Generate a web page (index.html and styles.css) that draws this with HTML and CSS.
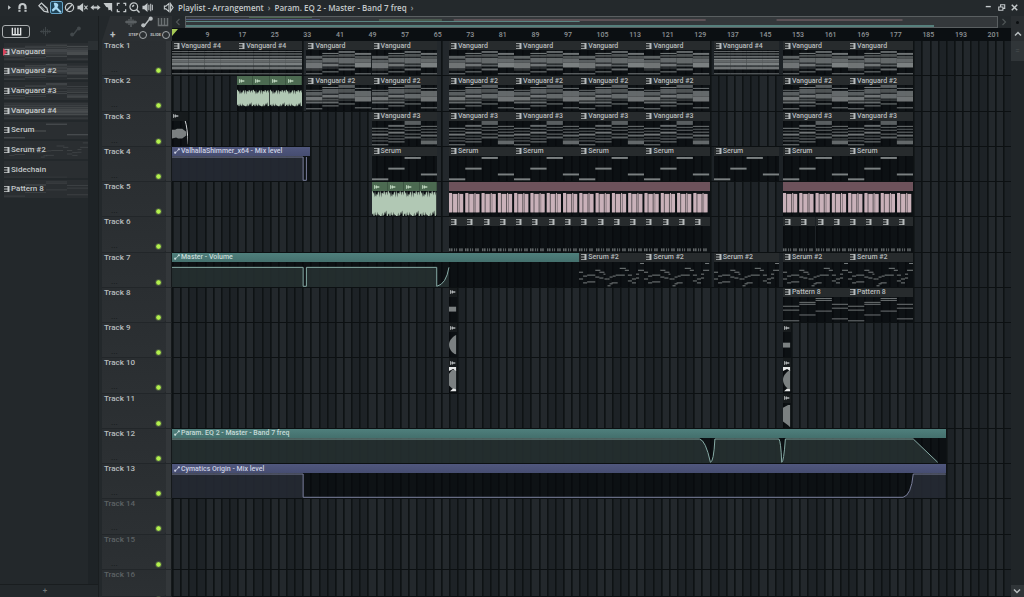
FILE: index.html
```html
<!DOCTYPE html>
<html lang="en">

<head>
  <meta charset="UTF-8" />
  <meta name="viewport" content="width=device-width, initial-scale=1.0" />
  <title>Playlist - Arrangement</title>
  <link rel="stylesheet" href="styles.css">
</head>

<body>
  <svg class="sprites" aria-hidden="true">
    <symbol id="i-arrow" viewBox="0 0 12 12"><path d="M4.5 3.5v5L7.5 6z" fill="currentColor"/></symbol>
    <symbol id="i-magnet" viewBox="0 0 12 12"><path d="M2.700 10.500V5.500a3.300 3.300 0 0 1 6.600 0v5" fill="none" stroke="currentColor" stroke-width="2.400"/><path d="M1 8.300h3.500M7.500 8.300H11" stroke="#23282b" stroke-width="0.900"/></symbol>
    <symbol id="i-pencil" viewBox="0 0 12 12"><path d="M1 4 3.800 1.200l6 5.500 1 4.300-4.300-1z" fill="none" stroke="currentColor" stroke-width="1.400"/><path d="m3 4.500 4 4M5 3l4 4" stroke="currentColor" stroke-width="0.900"/></symbol>
    <symbol id="i-brush" viewBox="0 0 12 12"><path d="M3 1c2-.8 5 0 5 2.500L7 6l4.500 4.500L10 12 5.500 7.800 2 10.500.8 8.500 4 5.500z" fill="currentColor"/></symbol>
    <symbol id="i-delete" viewBox="0 0 12 12"><circle cx="6" cy="6" r="4.500" fill="none" stroke="currentColor" stroke-width="1.300"/><path d="m3 9 6-6" stroke="currentColor" stroke-width="1.300"/></symbol>
    <symbol id="i-mute" viewBox="0 0 12 12"><path d="M.5 4h2.200L6.700 1v10l-4-3H.5z" fill="currentColor"/><path d="m8 4 3.500 4m0-4L8 8" stroke="currentColor" stroke-width="1.100"/></symbol>
    <symbol id="i-slip" viewBox="0 0 12 12"><path d="M0.500 6 4 3V5h4V3L11.500 6 8 9V7H4v2z" fill="currentColor"/></symbol>
    <symbol id="i-slice" viewBox="0 0 12 12"><path d="M.5 1H10v10L8 8.500 6 9 5.500 6 3.500 5.500z" fill="currentColor"/></symbol>
    <symbol id="i-select" viewBox="0 0 12 12"><path d="M1.500 4V1.500H4M8 1.500h2.500V4M10.500 8v2.500H8M4 10.500H1.500V8" fill="none" stroke="currentColor" stroke-width="1.400"/></symbol>
    <symbol id="i-zoom" viewBox="0 0 12 12"><circle cx="5.200" cy="5.200" r="4.200" fill="none" stroke="currentColor" stroke-width="1.300"/><path d="m8.200 8.200 3.300 3.300M3.500 5 5.500 3.500" stroke="currentColor" stroke-width="1.600"/></symbol>
    <symbol id="i-play" viewBox="0 0 12 12"><path d="M.5 4h2L6 1v10L2.500 8h-2z" fill="currentColor"/><path d="M7.500 3v6M9.500 2v8M11.300 3v6" stroke="currentColor" stroke-width="1.100"/></symbol>
    <symbol id="i-speaker" viewBox="0 0 12 12"><path d="M1.500 4.500h1.700L6.500 1.500v9L3.200 7.500H1.500zM8.300 2v8L11 6z" fill="none" stroke="currentColor" stroke-width="1.200"/></symbol>
    <symbol id="i-piano" viewBox="0 0 12 12"><path d="M1.500 2v7.500h9V2M4.500 2v7M7.500 2v7" fill="none" stroke="currentColor" stroke-width="1.500"/></symbol>
    <symbol id="i-wave" viewBox="0 0 12 12"><path d="M0 6h12M2 4.500v3M4 3v6M6 1v10M8 3.500v5M10 4.500v3" stroke="currentColor" stroke-width="1"/></symbol>
    <symbol id="i-auto" viewBox="0 0 12 12"><path d="M1.500 9.500h2l5.500-7h2" fill="none" stroke="currentColor" stroke-width="1.500"/><circle cx="2.300" cy="9.300" r="2.100" fill="currentColor"/><circle cx="9.700" cy="2.700" r="2.100" fill="currentColor"/></symbol>
    <symbol id="i-pattern" viewBox="0 0 6 6"><path d="M0 .5h4M0 3h4M0 5.500h4" stroke="currentColor" stroke-width="1" opacity="0.8"/><path d="M3.500 0h2v6h-2z" fill="currentColor"/></symbol>
    <symbol id="i-clip" viewBox="0 0 6 6"><path d="M.7 1v4M0 3h5.500M2.500 1.500v3M4 2v2" stroke="currentColor" stroke-width="0.900"/></symbol>
    <symbol id="i-up" viewBox="0 0 12 12"><path d="m3 7.500 3-3 3 3" fill="none" stroke="currentColor" stroke-width="1.500"/></symbol>
    <symbol id="i-down" viewBox="0 0 12 12"><path d="m3 4.500 3 3 3-3" fill="none" stroke="currentColor" stroke-width="1.500"/></symbol>
    <symbol id="i-left" viewBox="0 0 12 12"><path d="m7.500 3-3 3 3 3" fill="none" stroke="currentColor" stroke-width="1.200"/></symbol>
    <symbol id="i-right" viewBox="0 0 12 12"><path d="m4.500 3 3 3-3 3" fill="none" stroke="currentColor" stroke-width="1.200"/></symbol>
    <symbol id="i-min" viewBox="0 0 12 12"><path d="M3 5h5.500" stroke="currentColor" stroke-width="1.500"/></symbol>
    <symbol id="i-restore" viewBox="0 0 12 12"><path d="M3 5.500h4.500V9H3zM5 5V3h4.500v4H8" fill="none" stroke="currentColor" stroke-width="1.200"/></symbol>
    <symbol id="i-close" viewBox="0 0 12 12"><path d="m3 3 6 6m0-6L3 9" stroke="currentColor" stroke-width="1.600"/></symbol>
  </svg>

  <header class="titlebar">
    <div class="tools tools-menu">
      <button aria-label="Menu"><svg><use href="#i-arrow"/></svg></button>
      <button aria-label="Snap"><svg><use href="#i-magnet"/></svg></button>
    </div>
    <div class="tools">
      <button aria-label="Draw"><svg><use href="#i-pencil"/></svg></button>
      <button aria-label="Paint" class="active"><svg><use href="#i-brush"/></svg></button>
      <button aria-label="Delete"><svg><use href="#i-delete"/></svg></button>
      <button aria-label="Mute"><svg><use href="#i-mute"/></svg></button>
      <button aria-label="Slip"><svg><use href="#i-slip"/></svg></button>
      <button aria-label="Slice"><svg><use href="#i-slice"/></svg></button>
      <button aria-label="Select"><svg><use href="#i-select"/></svg></button>
      <button aria-label="Zoom"><svg><use href="#i-zoom"/></svg></button>
      <button aria-label="Playback"><svg><use href="#i-play"/></svg></button>
    </div>
    <h1 class="title">
      <svg><use href="#i-speaker"/></svg>
      <span>Playlist - Arrangement</span><i>›</i><span>Param. EQ 2 - Master - Band 7 freq</span><i>›</i>
    </h1>
    <div class="tools window-buttons">
      <button aria-label="Minimize"><svg><use href="#i-min"/></svg></button>
      <button aria-label="Restore"><svg><use href="#i-restore"/></svg></button>
      <button aria-label="Close"><svg><use href="#i-close"/></svg></button>
    </div>
  </header>

  <main class="workspace">
    <aside class="picker">
      <div class="picker-tabs">
        <button class="active" aria-label="Patterns"><svg><use href="#i-piano"/></svg></button>
        <button aria-label="Audio"><svg><use href="#i-wave"/></svg></button>
        <button aria-label="Automation"><svg><use href="#i-auto"/></svg></button>
      </div>
      <div class="picker-body">
        <div class="picker-list" id="picker"></div>
        <div class="picker-scroll"><button aria-label="Scroll options"></button></div>
      </div>
      <button class="picker-add" aria-label="Add pattern">+</button>
    </aside>

    <section class="playlist">
      <div class="playlist-head">
        <div class="corner">
          <div class="corner-row">
            <svg class="dim"><use href="#i-wave"/></svg>
            <svg><use href="#i-auto"/></svg>
            <svg class="dim"><use href="#i-piano"/></svg>
          </div>
          <div class="corner-row">
            <button class="add-track" aria-label="Add track">+</button>
            <label>STEP<input type="checkbox"></label>
            <label>SLIDE<input type="checkbox"></label>
          </div>
        </div>
        <div class="timeline">
          <div class="overview">
            <button aria-label="Scroll left"><svg><use href="#i-left"/></svg></button>
            <svg class="minimap" viewBox="0 0 206 10" preserveAspectRatio="none" id="minimap"></svg>
            <button aria-label="Scroll right"><svg><use href="#i-right"/></svg></button>
          </div>
          <div class="ruler" id="ruler"><span class="playhead"></span></div>
        </div>
        <div class="corner-right">
          <button class="dot" aria-label="Zoom"></button>
          <button aria-label="Scroll up"><svg><use href="#i-up"/></svg></button>
        </div>
      </div>
      <div class="playlist-body">
        <div class="tracks" id="tracks"></div>
        <div class="vscroll">
          <div class="thumb">=</div>
          <button aria-label="Scroll down"><svg><use href="#i-down"/></svg></button>
        </div>
      </div>
    </section>
  </main>

  <script src="playlist.js"></script>
</body>

</html>
```
FILE: styles.css
```css
* {
  box-sizing: border-box;
  margin: 0;
  padding: 0;
}

:root {
  --bars: 206;
  --panel: #23282b;
  --head: #2a2e31;
  --text: #b8bdbf;
  --note: #7b8081;
  --green: #4c6a51;
  --pink: #6d525b;
}

body {
  display: flex;
  flex-direction: column;
  height: 100vh;
  overflow: hidden;
  background: var(--panel);
  color: var(--text);
  font-family: Roboto, sans-serif;
  font-size: 8px;
  font-weight: 500;
  line-height: 8px;
}

button {
  border: none;
  background: none;
  color: inherit;
  font: inherit;
}

svg {
  display: block;
}

.sprites {
  position: absolute;
  width: 0;
  height: 0;
}

/* title bar */
.titlebar {
  display: flex;
  align-items: center;
  height: 16px;
  padding: 0 3px 1px;
  background: #24292c;
  color: #c4c9cb;
}

.tools {
  display: flex;
}

.tools-menu {
  margin-right: 8px;
}

.tools button {
  display: flex;
  align-items: center;
  justify-content: center;
  width: 13px;
  height: 13px;
}

.tools svg {
  width: 11px;
  height: 11px;
}

.tools .active {
  border: 1px solid #68a5c8;
  border-radius: 2px;
  background: #1f4357;
  color: #a5d7f2;
}

.title {
  display: flex;
  align-items: center;
  gap: 4px;
  margin-left: 9px;
  font-family: "Open Sans", sans-serif;
  font-size: 8px;
  font-weight: 600;
  line-height: 10px;
}

.title svg {
  width: 11px;
  height: 11px;
}

.title i {
  font-style: normal;
  opacity: 0.7;
}

.window-buttons {
  margin-left: auto;
}

.workspace {
  display: flex;
  flex: 1;
  min-height: 0;
}

/* pattern picker */
.picker {
  display: flex;
  flex-direction: column;
  width: 99px;
  border-right: 1px solid #1a1e20;
}

.picker-tabs {
  display: flex;
  height: 25px;
  padding: 9px 2px 3px;
}

.picker-tabs button {
  display: flex;
  align-items: center;
  justify-content: center;
  width: 30px;
  color: #42484b;
}

.picker-tabs .active {
  width: 28px;
  border: 1px solid #aaaeb0;
  border-radius: 3px;
  color: #e4e7e8;
}

.picker-tabs svg {
  width: 11px;
  height: 11px;
}

.picker-body {
  display: flex;
  flex: 1;
}

.picker-list {
  display: grid;
  grid-auto-rows: 1fr;
  width: 88px;
  height: 157px;
  margin-top: 1px;
  padding-left: 4px;
}

.pattern {
  position: relative;
  display: flex;
  align-items: center;
  gap: 1px;
  margin: 1px 0;
  background: #2a2e31;
  color: #c4c8c9;
  text-align: left;
}

.pattern .preview {
  position: absolute;
  inset: 1px 0;
  width: 100%;
  height: 16px;
  opacity: 0.2;
}

.pattern .icon {
  position: relative;
  width: 6px;
  height: 6px;
}

.pattern span {
  position: relative;
}

.pattern.selected::before {
  content: "";
  position: absolute;
  z-index: 1;
  left: -1px;
  border: 4px solid transparent;
  border-left-color: #d8435c;
  border-right: none;
}

.picker-scroll {
  width: 10px;
  margin-left: auto;
  background: #1e2326;
}

.picker-scroll button {
  display: block;
  width: 10px;
  height: 9px;
  background: #2b3033;
}

.picker-add {
  height: 13px;
  padding-right: 8px;
  border-top: 1px solid #191d1f;
  color: #6f7577;
}

/* playlist */
.playlist {
  display: flex;
  flex: 1;
  flex-direction: column;
  min-width: 0;
  padding-left: 3px;
}

.playlist-head {
  display: flex;
  height: 25px;
}

.corner {
  width: 70px;
  background: #2b2f32;
  clip-path: polygon(0 100%, 8px 0, 100% 0, 100% 100%);
}

.corner-row {
  display: flex;
  align-items: center;
  justify-content: flex-end;
  gap: 4px;
  height: 12px;
  padding-right: 3px;
}

.corner-row + .corner-row {
  gap: 3px;
  height: 13px;
  padding-right: 2px;
}

.corner-row svg {
  width: 12px;
  height: 12px;
}

.dim {
  color: #6b7072;
}

.corner-row label {
  display: flex;
  align-items: center;
  gap: 1px;
  font-size: 4px;
  font-weight: bold;
}

.corner-row input {
  appearance: none;
  width: 8px;
  height: 8px;
  border: 1px solid #a5a9ab;
  border-radius: 50%;
}

.add-track {
  margin-right: auto;
  padding-left: 8px;
  font-size: 10px;
  font-weight: bold;
}

.timeline {
  flex: 1;
}

.overview {
  display: flex;
  height: 12px;
}

.overview button {
  width: 13px;
  color: #4e5456;
}

.overview button svg {
  width: 12px;
  height: 12px;
}

.minimap {
  flex: 1;
  min-width: 0;
  height: 12px;
  border: 1px solid #5a5f61;
  background: #34383b;
}

.ruler {
  position: relative;
  height: 13px;
  background: #0b0f12;
  color: #8e9396;
}

.ruler .mark {
  position: absolute;
  top: 3px;
  padding-left: 1px;
  font-size: 7px;
}

.playhead {
  position: absolute;
  z-index: 1;
  left: 0;
  top: 1px;
  border-top: 7px solid #a6c955;
  border-right: 6px solid transparent;
}

.corner-right {
  display: flex;
  flex-direction: column;
  width: 13px;
  background: var(--head);
}

.corner-right button {
  display: flex;
  align-items: center;
  justify-content: center;
  height: 12px;
}

.corner-right svg,
.vscroll svg {
  width: 12px;
  height: 12px;
}

.corner-right .dot::before {
  content: "";
  width: 3px;
  height: 3px;
  border-radius: 50%;
  background: #0b0e10;
}

.playlist-body {
  display: flex;
  flex: 1;
  min-height: 0;
}

.tracks {
  display: grid;
  flex: 1;
  grid-template-rows: repeat(15, 1fr) 27px;
  min-height: 0;
}

.track {
  display: grid;
  grid-template-columns: 64px 6px 1fr;
  min-height: 0;
}

.track-head {
  position: relative;
  padding: 1px 2px;
  border-bottom: 1px solid #222629;
  border-radius: 0 0 3px 0;
  background: linear-gradient(#2a2e31, #2c3033);
}

.track-head .more {
  position: absolute;
  left: 9px;
  top: 25px;
  color: #15191b;
}

.track.unused .track-head {
  color: #5d6265;
}

.led {
  position: absolute;
  top: 26px;
  right: 4px;
  width: 7px;
  height: 7px;
  border: 1px solid #4d5a42;
  border-radius: 50%;
  background: radial-gradient(#b4f04e 40%, #5f8a33);
}

.track-strip {
  border-right: 1px solid #15191b;
  border-bottom: 1px solid #222629;
  background: #33373a;
}

.lane {
  position: relative;
  border-bottom: 1px solid #0c1012;
  background:
    repeating-linear-gradient(to right, #0e1214 0, #0e1214 1px, #14191b 1px, #14191b 2px, transparent 2px, transparent calc(100% * 2 / var(--bars))),
    repeating-linear-gradient(to right, #23282c 0, #23282c calc(100% * 4 / var(--bars)), #1d2226 calc(100% * 4 / var(--bars)), #1d2226 calc(100% * 8 / var(--bars)));
}

/* clips */
.clip {
  position: absolute;
  top: 0;
  bottom: 0;
  display: flex;
  flex-direction: column;
  overflow: hidden;
  background: rgba(5, 9, 11, 0.7);
}

.clip-name {
  display: flex;
  align-items: center;
  gap: 1px;
  height: 9px;
  padding-left: 2px;
  background: #272b2d;
  color: #b8bcbd;
  font-size: 7px;
  white-space: nowrap;
}

.clip-name svg {
  flex: none;
  width: 6px;
  height: 6px;
}

.clip-body {
  flex: 1;
  width: 100%;
  min-height: 0;
  color: var(--note);
}

.clip-body path {
  vector-effect: non-scaling-stroke;
}

.clip-body .area {
  opacity: 0.75;
}

.clip.green .clip-name { border-right: 1px solid #3d5642; background: var(--green); color: #c4dcc4; }
.clip.green .clip-body { color: #b1c8b4; }
.clip.pink .clip-name { background: var(--pink); }
.clip.pink .clip-body { color: #c9b1b9; }
.clip.teal .clip-name { background: linear-gradient(#4f7f7c, #44706d); color: #c6dad7; }
.clip.teal .clip-body { color: #86aaa5; }
.clip.teal .area { fill: #2b3737; }
.clip.purple .clip-name { background: linear-gradient(#50577d, #464d71); color: #ccd0e2; }
.clip.purple .clip-body { color: #7b809d; }
.clip.purple .area { fill: #2b303b; }
.clip.grey .clip-name { padding-left: 1px; background: #171b1d; }

/* scroll bar */
.vscroll {
  display: flex;
  flex-direction: column;
  justify-content: space-between;
  width: 13px;
  background: #202528;
}

.thumb {
  height: 20px;
  background: #303538;
  color: #4b5052;
  line-height: 20px;
  text-align: center;
}

.vscroll button {
  height: 12px;
  background: #303538;
}
```
FILE: playlist.js
```js
const BARS = 206;

// note rows per quarter of a pattern: [top, height, opacity]
const NOTES = {
  'Vanguard': [
    [[6, 3, .75], [10, 3, .7], [13, 6, .9], [20, 1, .6], [24, 1, 1]],
    [[3, 1, 1], [5, 2, .6], [8, 5, .8], [14, 3, .9], [18, 1, .5], [22, 1, 1]],
    [[1, 2, .8], [4, 3, .6], [8, 6, .8], [15, 2, .7], [19, 2, .8]],
    [[3, 2, .9], [6, 3, .6], [9, 4, .8], [13, 5, 1], [24, 1, 1]]
  ],
  'Vanguard #2': [
    [[5, 1, .8], [7, 4, .7], [12, 4, .9], [17, 2, .8], [24, 1, 1]],
    [[2, 1, 1], [4, 5, .7], [10, 3, .9], [14, 2, .6], [17, 2, .8], [21, 1, 1]],
    [[0, 3, .7], [4, 4, .6], [9, 5, .8], [15, 1, .6], [19, 1, 1]],
    [[3, 1, .9], [6, 6, .8], [12, 5, .9], [23, 1, 1]]
  ],
  'Vanguard #3': [
    [[7, 1, 1], [10, 1, .7], [13, 2, .9], [17, 1, .8], [20, 1, .8], [24, 1, 1]],
    [[4, 2, .8], [8, 1, .8], [11, 2, .9], [15, 1, .7], [18, 1, .9], [21, 1, 1]],
    [[0, 4, .7], [6, 1, .8], [9, 1, .8], [13, 1, .9], [16, 2, .7]],
    [[5, 1, .9], [8, 1, .7], [11, 1, .9], [14, 2, .8], [18, 1, .7], [20, 4, .8]]
  ],
  'Serum': [[[23, 2, 1]], [[12, 2, 1]], [[1, 2, 1]], [[18, 2, 1]]],
  'Pattern 8': [
    [[9, 1, .9], [13, 1, .9], [24, 1, .9]],
    [[5, 1, .9], [7, 1, .9], [18, 1, .9]],
    [[1, 1, .9], [3, 1, .9], [14, 1, .9]],
    [[7, 1, .9], [11, 1, .9], [22, 1, .9]]
  ],
  'Sidechain': [[[24, 1, .5]], [[24, 1, .5]], [[24, 1, .5]], []]
};
const CHORD = [[1, 1, .8], [3, 2, .6], [6, 2, .8], [9, 2, 1], [11, 2, .8], [13, 3, 1], [17, 3, .9], [24, 1, .9]];
NOTES['Vanguard #4'] = [CHORD, CHORD, CHORD, CHORD];

// melody of Serum #2: [x, y, width]
const MELODY = [
  [0, 10, 4], [4, 14, 4], [0, 17, 4], [4, 21, 4], [8, 13, 8], [8, 20, 8], [16, 8, 5], [20, 10, 5], [16, 15, 4],
  [20, 16, 4], [24, 12, 2], [25, 17, 3], [28, 24, 3], [28, 17, 2], [30, 15, 3], [30, 22, 3], [32, 21, 6], [33, 14, 3],
  [36, 13, 9], [40, 6, 6], [45, 8, 4], [48, 13, 4], [48, 19, 4], [52, 17, 4], [52, 21, 4], [56, 12, 3], [56, 16, 3],
  [58, 8, 6], [60, 1, 4]
];

function rect(x, y, w, h, o = 1) {
  return `<rect x="${x}" y="${y}" width="${w}" height="${h}" fill="currentColor" opacity="${o}"/>`;
}

function notes(name) {
  if (name === 'Serum #2') return MELODY.map(n => rect(n[0], n[1], n[2], 1)).join('');
  return NOTES[name].map((rows, i) => rows.map(r => rect(i * 16, r[0], 16, r[1], r[2])).join('')).join('');
}

// cheap repeatable noise for the waveforms
function noise(i) {
  const v = Math.sin(i * 12.9898) * 43758.5453;
  return v - Math.floor(v);
}

function waveform(top, bottom, jag) {
  let up = '', down = '';
  for (let i = 0; i <= 64; i += 2) {
    up += `L${i} ${top + noise(i) ** 2 * jag} `;
    down = `L${i} ${bottom - noise(i + 40) ** 2 * jag} ` + down;
  }
  return `<path d="M0 13 ${up}${down}Z" fill="currentColor"/>`;
}

function kicks(quarters) {
  let out = '';
  for (let q = 0; q < quarters; q++) {
    const x = q * 16;
    out += rect(x, 3, 13, 19, .45) + rect(x, 2, 3, 20) + rect(x + 4, 3, 4, 19) + rect(x + 9, 2, 1, 20) + rect(x + 10.5, 3, 3.5, 19);
  }
  return out;
}

// automation curve, with the area under it filled
function line(curve) {
  return `<path class="area" d="${curve}V26H0z"/><path d="${curve}" fill="none" stroke="currentColor"/>`;
}

const repeat = (starts, name) => starts.map(s => ({ start: s, length: 16, name }));
const FULL = [33, 49, 68, 84, 100, 116, 150, 166];
const LATE = FULL.slice(1);

const quarters = (start, count, extra) =>
  Array.from({ length: count }, (_, i) => ({ start: start + i * 4, length: 4, name: '', ...extra }));
const ticks = { icon: 'pattern', box: 16, body: [0, 2, 5, 7, 10, 12].map(x => rect(x, 23, x % 2 ? 1 : 1.5, 3, .8)).join('') };
const shot = (start, body) => ({ start, length: 2, name: '', icon: 'clip', color: 'grey', box: 8, body });
const dome = '<path d="M7 3C3 5 0 9 0 13s3 9 7 10z" fill="currentColor"/>';
const slab = '<path d="M0 7 3 3h4v20H4L0 19z" fill="currentColor"/>';
const flash = '<path d="M0 0h7v4L4 2 0 4zM1 25l3-3 3 1v2z" fill="#e4e6e6"/>';
const greenClips = (start, top, bottom, jag) =>
  quarters(start, 4, { icon: 'clip', color: 'green', box: 64, body: waveform(top, bottom, jag) });

const TRACKS = [
  [...repeat([0, 16, 133], 'Vanguard #4'), ...repeat(FULL, 'Vanguard')],
  [...greenClips(16, 5, 22, 5), ...repeat(FULL, 'Vanguard #2')],
  [
    { start: 0, length: 4, name: '', icon: 'clip', color: 'grey', box: 16, body: '<path d="M0 9h3l2-1 5 0 4 3v4l-4 3H6l-2-1-4 1z" fill="currentColor"/><path d="M13 0q2 6 3 24" fill="none" stroke="#d0d3d4"/>' },
    ...repeat(LATE, 'Vanguard #3')
  ],
  [
    { start: 0, length: 34, name: 'ValhallaShimmer_x64 - Mix level', icon: 'auto', color: 'purple', box: 34, body: line('M0 1H32.2V25H33V1') },
    ...repeat([49, 68, 84, 100, 116, 133, 150, 166], 'Serum')
  ],
  [
    ...greenClips(49, 0, 26, 7),
    { start: 68, length: 64, name: '', color: 'pink', box: 256, body: kicks(16) },
    { start: 150, length: 32, name: '', color: 'pink', box: 128, body: kicks(8) }
  ],
  [...quarters(68, 16, ticks), ...quarters(150, 8, ticks)],
  [
    { start: 0, length: 100, name: 'Master - Volume', icon: 'auto', color: 'teal', box: 100, body: line('M0 5.5H32.2V25H33V5.5H65V25Q67.300 23 68 5.5') },
    ...repeat([100, 116, 133, 150, 166], 'Serum #2')
  ],
  [shot(68, rect(0, 10, 7, 5)), ...repeat([150, 166], 'Pattern 8')],
  [shot(68, dome), shot(150, rect(0, 11, 7, 5))],
  [shot(68, slab + flash), shot(150, dome + flash)],
  [shot(150, '<path d="M0 5 5 2h2v23L5 23 0 19z" fill="currentColor"/>')],
  [{
    start: 0, length: 190, name: 'Param. EQ 2 - Master - Band 7 freq', icon: 'auto', color: 'teal', box: 190,
    body: line('M0 1H129.500Q131 2 132.200 25Q133 25 133.300 1H149Q149.500 3 149.700 25Q150.200 25 150.600 1H182L188 25')
  }],
  [{
    start: 0, length: 190, name: 'Cymatics Origin - Mix level', icon: 'auto', color: 'purple', box: 190,
    body: line('M0 1H32.2V25H179.500Q181.500 23 182 1H190')
  }],
  [], [], []
];

function clipHtml(clip) {
  const left = clip.start / BARS * 100;
  const width = clip.length / BARS * 100;
  const icon = clip.color ? clip.icon : 'pattern';
  return `<div class="clip ${clip.color || ''}" style="left:${left}%;width:${width}%">
    <div class="clip-name">${icon ? `<svg><use href="#i-${icon}"/></svg>` : ''}${clip.name}</div>
    <svg class="clip-body" viewBox="0 0 ${clip.box || 64} 26" preserveAspectRatio="none">${clip.body || notes(clip.name)}</svg>
  </div>`;
}

// the last track runs off the bottom of the window, so it gets no dots
document.getElementById('tracks').innerHTML = TRACKS.map((clips, i) => `
  <div class="track ${clips.length ? '' : 'unused'}">
    <div class="track-head">Track ${i + 1}${i < TRACKS.length - 1 ? '<span class="more">...</span>' : ''}<span class="led"></span></div>
    <div class="track-strip"></div>
    <div class="lane">${clips.map(clipHtml).join('')}</div>
  </div>`).join('');

const PATTERNS = ['Vanguard', 'Vanguard #2', 'Vanguard #3', 'Vanguard #4', 'Serum', 'Serum #2', 'Sidechain', 'Pattern 8'];
document.getElementById('picker').innerHTML = PATTERNS.map((name, i) => `
  <button class="pattern ${i ? '' : 'selected'}">
    <svg class="preview" viewBox="0 0 64 26" preserveAspectRatio="none">${notes(name)}</svg>
    <svg class="icon"><use href="#i-pattern"/></svg><span>${name}</span>
  </button>`).join('');

let marks = '';
for (let bar = 9; bar <= 201; bar += 8) {
  marks += `<span class="mark" style="left:${(bar - 1) / BARS * 100}%">${bar}</span>`;
}
document.getElementById('ruler').innerHTML += marks;

// overview strip, one thin row for each kind of clip
const MINI = [
  [16, 0, 16, 1, '#4c6a51'], [49, 2, 16, 2, '#4a5a4f'], [0, 2, 34, 1, '#50577d'], [68, 2, 64, 2, '#5d5257'],
  [150, 2, 32, 2, '#5d5257'], [0, 4, 100, 1, '#5b8582'], [0, 8, 190, 2, '#56807d']
];
document.getElementById('minimap').innerHTML = MINI
  .map(m => `<rect x="${m[0]}" y="${m[1]}" width="${m[2]}" height="${m[3]}" fill="${m[4]}"/>`).join('');
```
